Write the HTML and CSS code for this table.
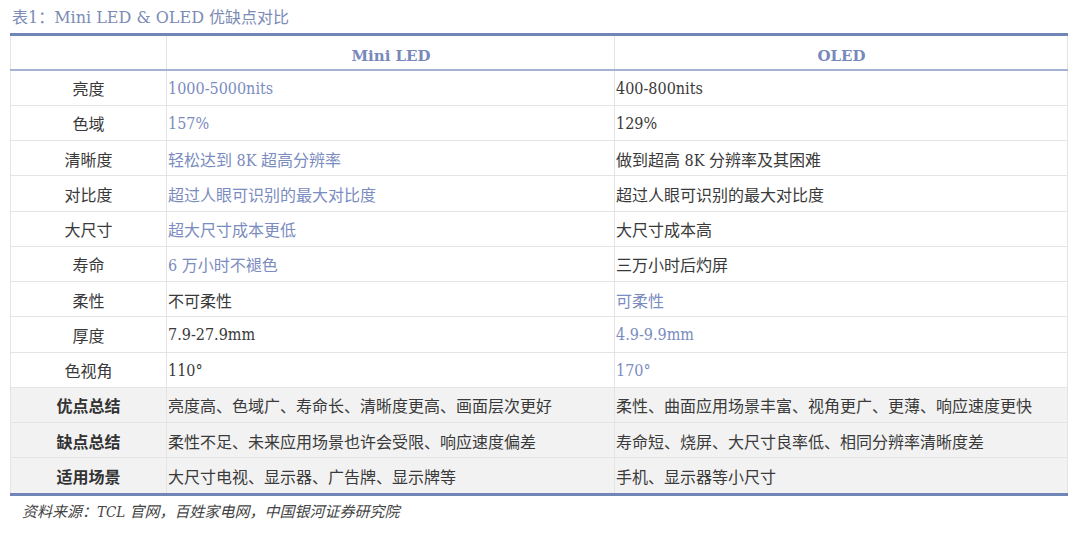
FILE: index.html
```html
<!DOCTYPE html>
<html lang="zh">
<head>
<meta charset="utf-8">
<link rel="stylesheet" href="styles.css">
</head>
<body>
<div class="page">
  <div class="title">表1：Mini LED &amp; OLED 优缺点对比</div>
  <table class="cmp">
    <thead>
      <tr><th class="c1"></th><th class="c2">Mini LED</th><th class="c3">OLED</th></tr>
    </thead>
    <tbody>
      <tr><td class="k">亮度</td><td class="hl">1000-5000nits</td><td>400-800nits</td></tr>
      <tr><td class="k">色域</td><td class="hl">157%</td><td>129%</td></tr>
      <tr><td class="k">清晰度</td><td class="hl">轻松达到 8K 超高分辨率</td><td>做到超高 8K 分辨率及其困难</td></tr>
      <tr><td class="k">对比度</td><td class="hl">超过人眼可识别的最大对比度</td><td>超过人眼可识别的最大对比度</td></tr>
      <tr><td class="k">大尺寸</td><td class="hl">超大尺寸成本更低</td><td>大尺寸成本高</td></tr>
      <tr><td class="k">寿命</td><td class="hl">6 万小时不褪色</td><td>三万小时后灼屏</td></tr>
      <tr><td class="k">柔性</td><td>不可柔性</td><td class="hl">可柔性</td></tr>
      <tr><td class="k">厚度</td><td>7.9-27.9mm</td><td class="hl">4.9-9.9mm</td></tr>
      <tr><td class="k">色视角</td><td>110°</td><td class="hl">170°</td></tr>
      <tr class="sum"><td class="k">优点总结</td><td>亮度高、色域广、寿命长、清晰度更高、画面层次更好</td><td>柔性、曲面应用场景丰富、视角更广、更薄、响应速度更快</td></tr>
      <tr class="sum"><td class="k">缺点总结</td><td>柔性不足、未来应用场景也许会受限、响应速度偏差</td><td>寿命短、烧屏、大尺寸良率低、相同分辨率清晰度差</td></tr>
      <tr class="sum"><td class="k">适用场景</td><td>大尺寸电视、显示器、广告牌、显示牌等</td><td>手机、显示器等小尺寸</td></tr>
    </tbody>
  </table>
  <div class="source">资料来源：TCL 官网，百姓家电网，中国银河证券研究院</div>
</div>
</body>
</html>
```

FILE: styles.css
```css
html, body {
  margin: 0;
  padding: 0;
  background: #ffffff;
}

.page {
  width: 1080px;
  height: 534px;
  padding: 7px 12px 0 10px;
  box-sizing: border-box;
  font-family: "DejaVu Serif Condensed", "DejaVu Serif", "Noto Sans CJK SC", serif;
  color: #3a3a3a;
}

.title {
  height: 26px;
  padding-left: 2px;
  font-family: "DejaVu Serif", "Noto Sans CJK SC", serif;
  font-size: 16px;
  line-height: 22px;
  color: #7b8bb6;
}

.cmp {
  width: 1058px;
  border-collapse: collapse;
  table-layout: fixed;
  border-top: 3px solid #7086b8;
  border-bottom: 3px solid #7086b8;
  font-size: 16px;
}

.cmp th,
.cmp td {
  border-left: 1px solid #e4e4e4;
  border-right: 1px solid #e4e4e4;
  border-bottom: 1px solid #e4e4e4;
  padding: 1px 0 0 1px;
  height: 33.25px;
  text-align: left;
  font-weight: normal;
  white-space: nowrap;
}

.cmp th {
  height: 35px;
  padding-top: 7px;
  box-sizing: border-box;
  border-bottom: 2px solid #a4b3d4;
  color: #7788bb;
  font-weight: bold;
  text-align: center;
  font-family: "DejaVu Serif", serif;
  font-size: 15px;
}

.cmp .c1 { width: 156px; }
.cmp .c2 { width: 448px; }

.cmp td.k {
  text-align: center;
  padding: 1px 0 0 0;
}

.cmp td.hl {
  color: #7b8cc0;
}

.cmp tr.sum td {
  background: #f2f2f2;
}

.cmp tr.sum td.k {
  font-weight: bold;
  color: #333333;
}

.cmp tr:last-child td {
  border-bottom: none;
}

.source {
  padding: 6px 0 0 12px;
  font-size: 15px;
  line-height: 20px;
  font-style: italic;
  color: #444444;
}
```
